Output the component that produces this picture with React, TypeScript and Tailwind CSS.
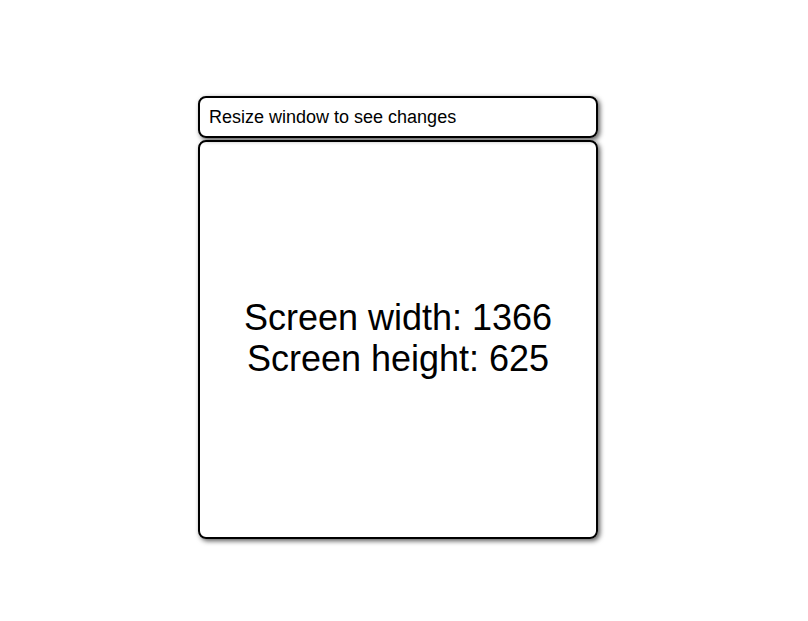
export default function App() {
  return (
    <div className="min-h-[621px] w-full bg-white pt-[96px] pl-[198px]" style={{ fontFamily: '"Liberation Sans", Arial, sans-serif' }}>
      <div className="flex w-[400px] flex-col gap-[2px]">
        <div className="flex h-[42px] items-center rounded-[8px] border-2 border-black px-[9px] text-[18px] text-black shadow-[2px_2px_5px_rgba(0,0,0,0.65)]">
          Resize window to see changes
        </div>
        <div className="flex h-[399px] flex-col items-center justify-center rounded-[8px] border-2 border-black pb-[4px] text-center text-[36px] leading-[41px] text-black shadow-[2px_2px_5px_rgba(0,0,0,0.65)]">
          <div>Screen width: 1366</div>
          <div>Screen height: 625</div>
        </div>
      </div>
    </div>
  );
}
